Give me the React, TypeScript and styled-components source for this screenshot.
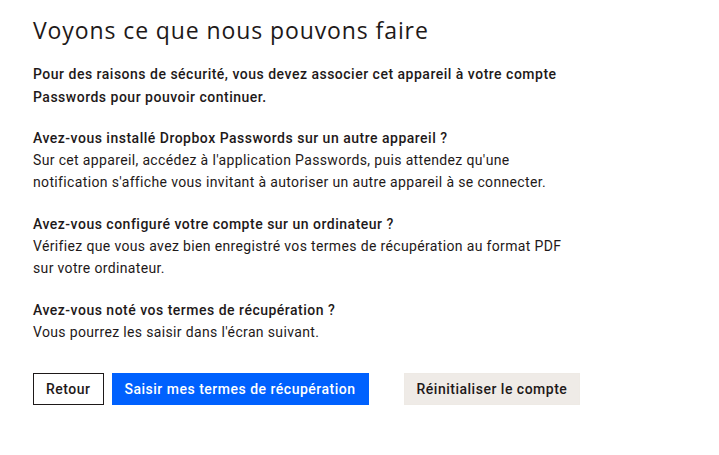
import styled, { createGlobalStyle } from "styled-components"

const GlobalStyle = createGlobalStyle`
  body {
    margin: 0;
    background: #ffffff;
    color: #1e1919;
    font-family: Roboto, "Liberation Sans", sans-serif;
  }
`

const sections = [
  {
    title: "Avez-vous installé Dropbox Passwords sur un autre appareil ?",
    text: "Sur cet appareil, accédez à l'application Passwords, puis attendez qu'une notification s'affiche vous invitant à autoriser un autre appareil à se connecter.",
  },
  {
    title: "Avez-vous configuré votre compte sur un ordinateur ?",
    text: "Vérifiez que vous avez bien enregistré vos termes de récupération au format PDF sur votre ordinateur.",
  },
  {
    title: "Avez-vous noté vos termes de récupération ?",
    text: "Vous pourrez les saisir dans l'écran suivant.",
  },
]

export default function App() {
  return (
    <>
      <GlobalStyle />
      <Page>
        <Title>Voyons ce que nous pouvons faire</Title>
        <Lead>
          Pour des raisons de sécurité, vous devez associer cet appareil à votre compte Passwords pour pouvoir continuer.
        </Lead>
        {sections.map((s) => (
          <Section key={s.title}>
            <strong>{s.title}</strong>
            <p>{s.text}</p>
          </Section>
        ))}
        <Actions>
          <Button $variant="outline">Retour</Button>
          <Button $variant="primary">Saisir mes termes de récupération</Button>
          <Spacer />
          <Button $variant="soft">Réinitialiser le compte</Button>
        </Actions>
      </Page>
    </>
  )
}

const Page = styled.div`
  padding: 14px 0 0 33px;
  width: 540px;
  font-size: 14px;
  line-height: 22px;
  letter-spacing: 0.35px;
`

const Title = styled.h1`
  margin: 0 0 17px;
  font-family: "Open Sans", "Liberation Sans", sans-serif;
  font-weight: 400;
  font-size: 23px;
  line-height: 32px;
  letter-spacing: 0.9px;
  white-space: nowrap;
`

const Lead = styled.p`
  margin: 0 0 18px;
  font-weight: 500;
  line-height: 23px;
  letter-spacing: 0.5px;
`

const Section = styled.div`
  margin-bottom: 20px;
  strong {
    display: block;
    font-weight: 500;
    letter-spacing: 0.5px;
  }
  p {
    margin: 0;
  }
`

const Actions = styled.div`
  display: flex;
  align-items: center;
  gap: 8px;
  margin-top: 30px;
  width: 600px;
`

const Spacer = styled.div`
  width: 19px;
`

const Button = styled.button<{ $variant: "outline" | "primary" | "soft" }>`
  height: 32px;
  padding: 0 12px;
  font-family: Roboto, "Liberation Sans", sans-serif;
  font-size: 14px;
  font-weight: 500;
  letter-spacing: 0.5px;
  white-space: nowrap;
  border: 1px solid
    ${(p) => (p.$variant === "outline" ? "#1e1919" : p.$variant === "primary" ? "#0061fe" : "#eeeae5")};
  background: ${(p) => (p.$variant === "primary" ? "#0061fe" : p.$variant === "soft" ? "#efebe7" : "#ffffff")};
  color: ${(p) => (p.$variant === "primary" ? "#ffffff" : "#1e1919")};
  cursor: pointer;
`
